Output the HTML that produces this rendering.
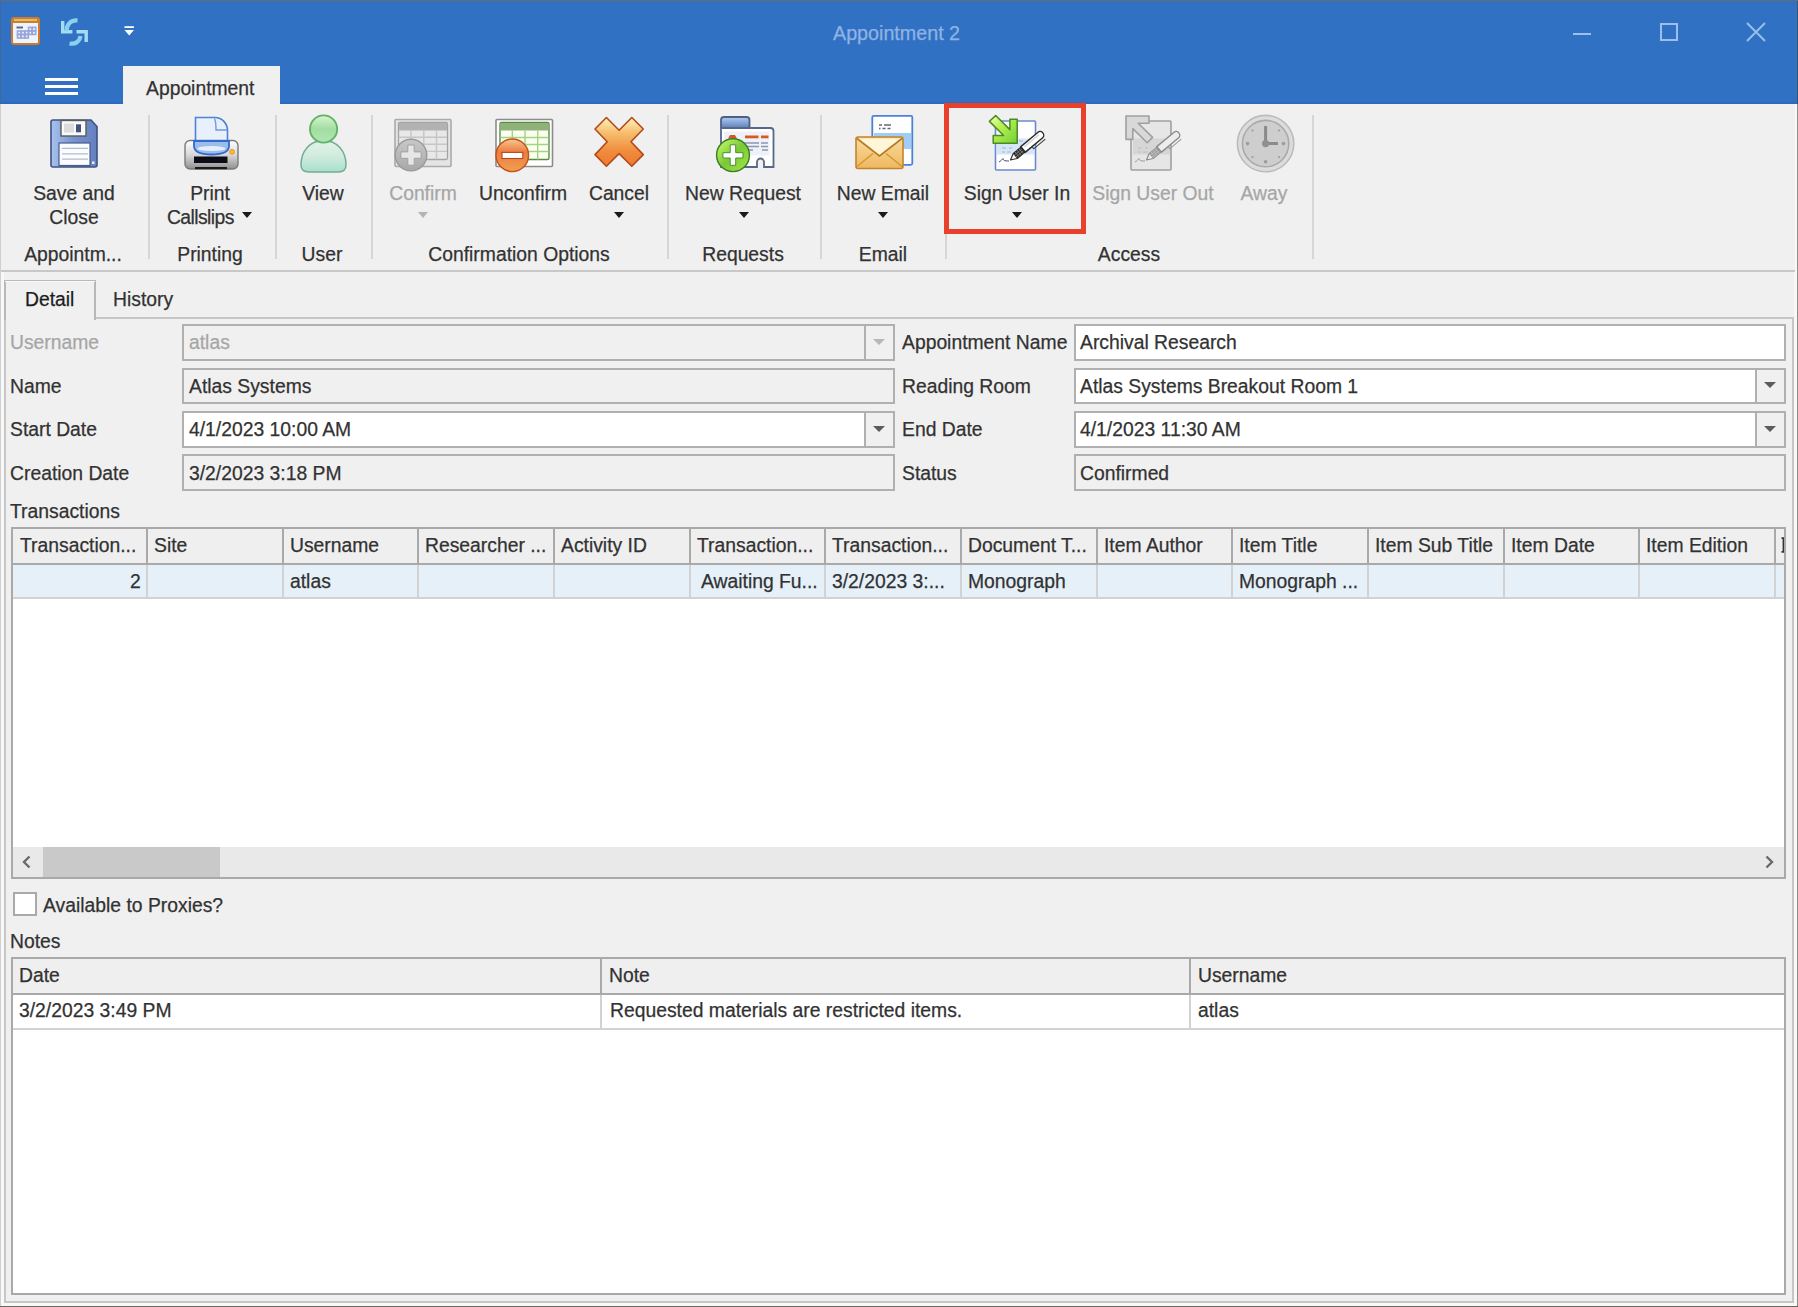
<!DOCTYPE html>
<html><head><meta charset="utf-8">
<style>
*{box-sizing:border-box}
html,body{margin:0;padding:0}
body{width:1798px;height:1307px;position:relative;overflow:hidden;background:#f0f0f0;font-family:"Liberation Sans",sans-serif;color:#323232}
.a{position:absolute}
.t{position:absolute;white-space:nowrap;font-size:20px;line-height:20px;margin-top:-1px;transform-origin:0 50%;transform:scaleX(.966);-webkit-text-stroke:0.25px currentColor}
.c{transform-origin:50% 50%;transform:translateX(-50%) scaleX(.966)}
.dis{color:#a6a6a6}
.sep{position:absolute;top:115px;width:1.5px;height:144px;background:#d6d6d6}
.arr{position:absolute;width:0;height:0;border-left:5px solid transparent;border-right:5px solid transparent;border-top:6px solid #1a1a1a}
.inp{position:absolute;border:2px solid #b0b0b0;background:#fff}
.ro{background:#f0f0f0}
.btn{position:absolute;top:0;bottom:0;right:0;width:29px;border-left:2px solid #b0b0b0;background:#f0f0f0}
.btn i{position:absolute;left:7px;top:12.5px;width:0;height:0;border-left:6px solid transparent;border-right:6px solid transparent;border-top:6.5px solid #5c5c5c}
</style></head><body>
<div class="a" style="left:0;top:0;width:1798px;height:1307px;background:#f8f8f8"></div>
<div class="a" style="left:4px;top:272px;width:1790px;height:1030px;background:#f0f0f0"></div>
<div class="a" style="left:0;top:104px;width:1px;height:1203px;background:#cfcfcf"></div>
<div class="a" style="left:1797px;top:104px;width:1px;height:1203px;background:#918c88"></div>
<div class="a" style="left:0;top:1306px;width:1798px;height:1px;background:#6b6864"></div>
<div class="a" style="left:0;top:0;width:1798px;height:104px;background:#3171c3"></div>
<div class="a" style="left:0;top:0;width:1798px;height:1px;background:#606c76"></div>
<div class="a" style="left:0;top:1px;width:1px;height:103px;background:#3d6a9e"></div>
<div class="a" style="left:1797px;top:1px;width:1px;height:103px;background:#3a5570"></div>
<div class="a" style="left:1px;top:102px;width:1796px;height:2px;background:#2d69bf"></div>
<div class="a" style="left:1px;top:104px;width:1794px;height:167px;background:#f0f0f0"></div>
<div class="t" style="left:833px;top:24px;color:#8fb3e4;transform:scaleX(.985)">Appointment 2</div>
<div class="a" style="left:1573px;top:33px;width:18px;height:2px;background:#9cc0ec"></div>
<div class="a" style="left:1660px;top:23px;width:18px;height:18px;border:2px solid #9cc0ec"></div>
<svg class="a" style="left:1745px;top:21px" width="22" height="22" viewBox="0 0 22 22"><path d="M2 2L20 20M20 2L2 20" stroke="#9cc0ec" stroke-width="1.8"/></svg>
<div class="a" style="left:45px;top:77.5px;width:33px;height:3px;background:#fff"></div>
<div class="a" style="left:45px;top:84.5px;width:33px;height:3px;background:#fff"></div>
<div class="a" style="left:45px;top:92px;width:33px;height:3px;background:#fff"></div>
<div class="a" style="left:123px;top:66px;width:157px;height:40px;background:#f0f0f0"></div>
<div class="t" style="left:146px;top:79px">Appointment</div>
<div class="a" style="left:1px;top:270px;width:1794px;height:2px;background:#c8c8c8"></div>
<div class="sep" style="left:148.25px"></div>
<div class="sep" style="left:275.25px"></div>
<div class="sep" style="left:371.25px"></div>
<div class="sep" style="left:667.25px"></div>
<div class="sep" style="left:820.25px"></div>
<div class="sep" style="left:945.25px"></div>
<div class="sep" style="left:1312.25px"></div>
<div class="t c " style="left:74px;top:184px">Save and</div>
<div class="t c " style="left:73.5px;top:207.5px">Close</div>
<div class="t c " style="left:210px;top:184px">Print</div>
<div class="t" style="left:167px;top:207.5px;letter-spacing:-0.6px">Callslips</div>
<div class="arr" style="left:241.5px;top:212px"></div>
<div class="t c " style="left:322.5px;top:184px">View</div>
<div class="t c dis" style="left:423px;top:184px">Confirm</div>
<div class="arr" style="left:417.5px;top:212px;border-top-color:#b4b4b4"></div>
<div class="t c " style="left:523px;top:184px">Unconfirm</div>
<div class="t c " style="left:619px;top:184px">Cancel</div>
<div class="arr" style="left:614px;top:212px"></div>
<div class="t c " style="left:743px;top:184px">New Request</div>
<div class="arr" style="left:739px;top:212px"></div>
<div class="t c " style="left:883px;top:184px">New Email</div>
<div class="arr" style="left:878px;top:212px"></div>
<div class="t c " style="left:1016.5px;top:184px">Sign User In</div>
<div class="arr" style="left:1012px;top:212px"></div>
<div class="t c dis" style="left:1153px;top:184px">Sign User Out</div>
<div class="t c dis" style="left:1264px;top:184px">Away</div>
<div class="t c " style="left:73px;top:245px">Appointm...</div>
<div class="t c " style="left:210px;top:245px">Printing</div>
<div class="t c " style="left:322px;top:245px">User</div>
<div class="t c " style="left:518.5px;top:245px">Confirmation Options</div>
<div class="t c " style="left:742.5px;top:245px">Requests</div>
<div class="t c " style="left:883px;top:245px">Email</div>
<div class="t c " style="left:1128.5px;top:245px">Access</div>
<div class="a" style="left:944px;top:102.5px;width:142px;height:131px;border:5px solid #e8402a"></div>
<svg class="a" style="left:0;top:0" width="1798" height="290" viewBox="0 0 1798 290">
<defs>
<linearGradient id="gFlop" x1="0" y1="0" x2="1" y2="0"><stop offset="0" stop-color="#a9c2ee"/><stop offset="0.5" stop-color="#7593cf"/><stop offset="1" stop-color="#6580c0"/></linearGradient>
<linearGradient id="gHead" x1="0" y1="0" x2="0" y2="1"><stop offset="0" stop-color="#d8f4d0"/><stop offset="0.5" stop-color="#a2dea0"/><stop offset="1" stop-color="#b0e4b8"/></linearGradient>
<linearGradient id="gBody" x1="0" y1="0" x2="0" y2="1"><stop offset="0" stop-color="#e2f2e6"/><stop offset="0.45" stop-color="#d4ece0"/><stop offset="1" stop-color="#a8e0cc"/></linearGradient>
<linearGradient id="gX" x1="0" y1="0" x2="0" y2="1"><stop offset="0" stop-color="#fff4c0"/><stop offset="0.3" stop-color="#f6c070"/><stop offset="0.7" stop-color="#f08a3c"/><stop offset="1" stop-color="#ee7a30"/></linearGradient>
<linearGradient id="gOr" x1="0" y1="0" x2="0" y2="1"><stop offset="0" stop-color="#f8c890"/><stop offset="0.4" stop-color="#ec7c40"/><stop offset="1" stop-color="#f0a050"/></linearGradient>
<linearGradient id="gGr" x1="0" y1="0" x2="1" y2="1"><stop offset="0" stop-color="#d0ff70"/><stop offset="0.5" stop-color="#78c838"/><stop offset="1" stop-color="#a8e848"/></linearGradient>
<linearGradient id="gGy" x1="0" y1="0" x2="0" y2="1"><stop offset="0" stop-color="#c8c8c8"/><stop offset="1" stop-color="#a8a8a8"/></linearGradient>
<linearGradient id="gArr" x1="0" y1="0" x2="1" y2="1"><stop offset="0" stop-color="#f0ffc0"/><stop offset="0.4" stop-color="#b8f050"/><stop offset="1" stop-color="#70d038"/></linearGradient>
<linearGradient id="gEnv" x1="0" y1="0" x2="0" y2="1"><stop offset="0" stop-color="#f8dca0"/><stop offset="1" stop-color="#eeb860"/></linearGradient>
<linearGradient id="gTab" x1="0" y1="0" x2="0" y2="1"><stop offset="0" stop-color="#b0ccf4"/><stop offset="1" stop-color="#5f7fb8"/></linearGradient>
<linearGradient id="gPr" x1="0" y1="0" x2="0" y2="1"><stop offset="0" stop-color="#ffffff"/><stop offset="0.5" stop-color="#d8d8d8"/><stop offset="1" stop-color="#909090"/></linearGradient>
</defs>

<!-- title bar calendar icon -->
<rect x="12" y="18" width="27" height="26" rx="2" fill="#eef4fc" stroke="#d27a28" stroke-width="2"/>
<rect x="12" y="18" width="27" height="5" fill="#c8822e"/>
<rect x="14" y="19.3" width="23" height="1.4" fill="#f4d08c"/>
<rect x="16.5" y="26.5" width="6.5" height="2" fill="#5a6890"/>
<g fill="none" stroke="#9aa6d8" stroke-width="1.6">
<rect x="17.5" y="31" width="3.4" height="3.4"/><rect x="21.2" y="31" width="3.4" height="3.4"/><rect x="24.9" y="31" width="3.4" height="3.4"/><rect x="28.6" y="31" width="3.4" height="3.4"/><rect x="32.3" y="31" width="3.4" height="3.4"/>
<rect x="17.5" y="34.6" width="3.4" height="3.4"/><rect x="21.2" y="34.6" width="3.4" height="3.4"/><rect x="24.9" y="34.6" width="3.4" height="3.4"/>
<rect x="28.6" y="27.4" width="3.4" height="3.4"/><rect x="32.3" y="27.4" width="3.4" height="3.4"/>
</g>
<!-- sync icon -->
<g fill="#a4dcf2">
<path d="M61 21h3.4v9h8v3.4H61z"/>
<path d="M76.5 30h11.4v12h-3.4v-8.6h-8z"/>
</g>
<path d="M66.5 31 C66.5 24 71 20 77.5 20.5" fill="none" stroke="#8ccfee" stroke-width="4.2"/>
<path d="M80.5 36 C79.5 42 75 44.5 69.5 43.5" fill="none" stroke="#8ccfee" stroke-width="4.2"/>
<!-- qat dropdown -->
<rect x="124.5" y="26.2" width="9.4" height="1.8" fill="#fff"/>
<path d="M124.5 30h9.4l-4.7 5.5z" fill="#fff"/>

<!-- Save and Close floppy -->
<path d="M51 122a2 2 0 0 1 2-2h38l6 6.5v38.5a2 2 0 0 1-2 2H53a2 2 0 0 1-2-2z" fill="url(#gFlop)" stroke="#3f5283" stroke-width="1.6"/>
<rect x="61" y="120.5" width="25" height="15.5" fill="#fafafa" stroke="#5a5a5a" stroke-width="1.4"/>
<rect x="64" y="123.5" width="10" height="9" fill="#dcdcdc"/>
<rect x="76" y="124.3" width="5" height="8" fill="#41537e"/>
<rect x="59" y="143" width="31" height="22.5" fill="#fbfcff" stroke="#4a5c8a" stroke-width="1.2"/>
<g stroke="#b4bccc" stroke-width="1.3"><path d="M62 148.3h26M62 153.8h26M62 159.2h26"/></g>
<rect x="92" y="161.5" width="2.5" height="2.5" fill="#e8eef8"/>

<!-- printer -->
<path d="M195.5 117.5h19.5c7 0 12.5 6 12.5 13v11h-32z" fill="#e8f0fb" stroke="#4e82d8" stroke-width="1.6"/>
<path d="M214.5 118.5c1.5 3 1.5 8 1.5 11.5h11" fill="none" stroke="#6c9ae0" stroke-width="1.4"/>
<rect x="185" y="140.5" width="53" height="28.5" rx="5" fill="url(#gPr)" stroke="#7a7a7a" stroke-width="1.4"/>
<path d="M194 141h35v5c0 6-8 8.5-17.5 8.5S194 152 194 146z" fill="#9cbcec" stroke="#2f6ad0" stroke-width="1.8"/>
<ellipse cx="211.5" cy="148.5" rx="14" ry="2.5" fill="#e4eefc"/>
<rect x="194" y="156.5" width="33.5" height="6.5" fill="#0c0c18"/>
<rect x="195" y="167" width="32" height="2.2" fill="#1a1a1a"/>
<circle cx="232" cy="151.8" r="2.4" fill="#f8c020" stroke="#f08020" stroke-width="0.8"/>

<!-- person -->
<path d="M301 165c0-14 9-24.5 22.5-24.5S346 151 346 165c0 4.5-3 7-8 7h-29c-5 0-8-2.5-8-7z" fill="url(#gBody)" stroke="#72ac96" stroke-width="1.5"/>
<circle cx="323.6" cy="129" r="13.6" fill="url(#gHead)" stroke="#62b264" stroke-width="1.9"/>

<!-- confirm (gray) -->
<rect x="395" y="119.5" width="56" height="47" rx="1" fill="#e4e4e4" stroke="#ababab" stroke-width="1.6"/>
<rect x="398.5" y="122.5" width="49" height="37" rx="1.5" fill="#e8e8e8" stroke="#a4a4a4" stroke-width="1.3"/>
<rect x="399" y="123" width="48" height="7.5" fill="#b2b2b2"/>
<g stroke="#c6c6c6" stroke-width="1.4"><path d="M411 130.5v29M423.8 130.5v29M436.5 130.5v29M399 137.2h48M399 144.3h48M399 151.4h48"/></g>
<circle cx="411" cy="155.1" r="15.8" fill="url(#gGy)" stroke="#9a9a9a" stroke-width="1.4"/>
<path d="M407.8 145h6.4v6.9h6.9v6.4h-6.9v6.9h-6.4v-6.9h-6.9v-6.4h6.9z" fill="#e6e6e6" stroke="#a2a2a2" stroke-width="1"/>

<!-- unconfirm -->
<rect x="496" y="119.5" width="56.5" height="47" rx="1" fill="#ffffff" stroke="#8c8c8c" stroke-width="1.6"/>
<rect x="500" y="122.5" width="49" height="37" rx="1.5" fill="#fbfff0" stroke="#5a8c44" stroke-width="1.4"/>
<rect x="500.5" y="123" width="48" height="7.5" fill="#8fb27a"/>
<g stroke="#a2d282" stroke-width="1.4"><path d="M512.3 130.5v29M525 130.5v29M537.7 130.5v29M500.5 137.5h48M500.5 144.5h48M500.5 151.5h48"/></g>
<circle cx="512.3" cy="155.3" r="16.3" fill="url(#gOr)" stroke="#c4501e" stroke-width="1.4"/>
<rect x="502" y="152.4" width="20.8" height="6.1" fill="#fff" stroke="#b84818" stroke-width="1.1"/>

<!-- cancel X -->
<path d="M606.4 117.5L619.1 130.3L631.8 117.5L643.3 129L631 141.8L643.3 154.6L631.8 166.3L619.1 153.6L606.4 166.3L595 154.6L607.2 141.8L595 129Z" fill="url(#gX)" stroke="#b44a1a" stroke-width="1.6" stroke-linejoin="round"/>

<!-- new request -->
<path d="M721 128V120a3 3 0 0 1 3-3h22.5a3 3 0 0 1 3 3v8" fill="url(#gTab)" stroke="#4c6184" stroke-width="1.8"/>
<path d="M721 128h49.5a3 3 0 0 1 3 3v36h-9.5v-5a3.5 3.5 0 0 0-7 0v5h-36z" fill="#ffffff" stroke="#56688a" stroke-width="1.8"/>
<rect x="724" y="131.5" width="45.5" height="24" fill="#eef2f8"/>
<rect x="745" y="135.5" width="13.5" height="2.8" fill="#d85a20"/>
<rect x="761" y="135.5" width="7.5" height="2.8" fill="#d85a20"/>
<path d="M728 138.5l2-3.5h5l2 3.5z" fill="#d05a20"/>
<g stroke="#8a98b0" stroke-width="1.4"><path d="M744 143h15M761 143h7M744 146.5h15M761 146.5h7M748 150h5M762 150h6"/></g>
<circle cx="733" cy="155.2" r="16.4" fill="url(#gGr)" stroke="#3c7c22" stroke-width="1.4"/>
<path d="M730.2 144.8h5.5v7.9h7.3v5.3h-7.3v7.3h-5.5v-7.3h-7.3v-5.3h7.3z" fill="#ffffff" stroke="#4c9028" stroke-width="1"/>

<!-- new email -->
<rect x="872.3" y="115.8" width="40" height="49" rx="1.5" fill="#ffffff" stroke="#4a82d8" stroke-width="1.8"/>
<rect x="874" y="133" width="37" height="16" fill="#a0ccf6"/>
<g stroke="#606878" stroke-width="1.3"><path d="M879 125h3M884 125h7M879 128.5h1.5M882.5 128.5h3M887.5 128.5h3"/></g>
<rect x="856" y="137" width="47" height="31.5" rx="2" fill="url(#gEnv)" stroke="#c48428" stroke-width="1.6"/>
<path d="M857 138.5L879.5 156L902 138.5" fill="#fff6d8" stroke="#b87820" stroke-width="1.6"/>
<path d="M857 166.5L873 153.5M902 166.5L886 153.5" stroke="#d4962c" stroke-width="1.4"/>

<!-- sign user in -->
<rect x="995.5" y="121" width="40" height="49" rx="1" fill="#ffffff" stroke="#6a88d4" stroke-width="1.6"/>
<rect x="997" y="138.5" width="37" height="16" fill="#d4e6f8"/>
<g stroke="#a8b4c8" stroke-width="1.2"><path d="M1002 148h4M1009 148h3M1002 152h3M1007 152h4M1019 141h4"/></g>
<path d="M999 162c2-1 3-2.5 4-3.5c0.5 2 1 2.5 6 2.5" fill="none" stroke="#3a4a80" stroke-width="1"/>
<path d="M995.7 115.5L1009.9 129.6V119.3H1017.2V143.2H993.2V135.5H1003.6L989.4 121.4Z" fill="url(#gArr)" stroke="#4a8a22" stroke-width="1.5" stroke-linejoin="round"/>
<g transform="translate(1010.5 160) rotate(-40)">
<path d="M0 0L6 -3.1H16V3.1H6z" fill="#fafafa" stroke="#333" stroke-width="1.2" stroke-linejoin="round"/>
<rect x="6" y="-3.6" width="10.5" height="7.2" fill="#2c2c2c"/>
<g stroke="#9a9a9a" stroke-width="0.6"><path d="M8.6 -3.6v7.2M11.2 -3.6v7.2M13.8 -3.6v7.2M6 -1.2h10.5M6 1.2h10.5"/></g>
<path d="M16.5 -3.6H39a3.2 3.6 0 0 1 0 7.2H16.5z" fill="#ffffff" stroke="#2a2a2a" stroke-width="1.4"/>
<path d="M19 -1.1H38" stroke="#d8d8d8" stroke-width="1.6"/>
<path d="M25 3.6V6.4H40" fill="none" stroke="#3a3a3a" stroke-width="1.1"/>
</g>

<!-- sign user out (disabled) -->
<rect x="1131" y="121" width="40" height="49" rx="1" fill="#e6e6e6" stroke="#a0a0a0" stroke-width="1.6"/>
<rect x="1133" y="138.5" width="37" height="16" fill="#d6d6d6"/>
<g stroke="#bdbdbd" stroke-width="1.2"><path d="M1138 148h4M1145 148h3M1138 152h3M1143 152h4"/></g>
<path d="M1135 162c2-1 3-2.5 4-3.5c0.5 2 1 2.5 6 2.5" fill="none" stroke="#9a9a9a" stroke-width="1"/>
<path d="M1126 116H1149V123.2H1138.2L1152.6 137.4L1147.2 142.8L1132.8 128.6V139.4H1126Z" fill="#d8d8d8" stroke="#a0a0a0" stroke-width="1.6" stroke-linejoin="round"/>
<g transform="translate(1146.5 160) rotate(-40)">
<path d="M0 0L6 -3.1H16V3.1H6z" fill="#eeeeee" stroke="#8a8a8a" stroke-width="1.2" stroke-linejoin="round"/>
<rect x="6" y="-3.6" width="10.5" height="7.2" fill="#9c9c9c"/>
<g stroke="#c8c8c8" stroke-width="0.6"><path d="M8.6 -3.6v7.2M11.2 -3.6v7.2M13.8 -3.6v7.2M6 -1.2h10.5M6 1.2h10.5"/></g>
<path d="M16.5 -3.6H39a3.2 3.6 0 0 1 0 7.2H16.5z" fill="#ededed" stroke="#8c8c8c" stroke-width="1.4"/>

<path d="M25 3.6V6.4H40" fill="none" stroke="#999" stroke-width="1.1"/>
</g>

<!-- away clock -->
<circle cx="1265.6" cy="143.6" r="28.2" fill="#dcdcdc" stroke="#bcbcbc" stroke-width="1.6"/>
<circle cx="1265.6" cy="143.6" r="23.2" fill="#cecece" stroke="#aaaaaa" stroke-width="1.6"/>
<g fill="#9c9c9c"><circle cx="1247.6" cy="143.6" r="1.8"/><circle cx="1283.5" cy="143.6" r="1.8"/><circle cx="1265.6" cy="161.8" r="1.8"/>
<circle cx="1252.5" cy="130.5" r="1.1"/><circle cx="1279" cy="130.5" r="1.1"/><circle cx="1252.5" cy="157" r="1.1"/><circle cx="1279" cy="157" r="1.1"/></g>
<path d="M1265.6 126v17.6h12.3" fill="none" stroke="#8a8a8a" stroke-width="3"/>
<circle cx="1265.6" cy="143.6" r="3.6" fill="#909090"/>
</svg>

<div class="a" style="left:3.5px;top:317px;width:1790.5px;height:986px;border:2px solid #c6c6c6"></div>
<div class="a" style="left:3.5px;top:279.5px;width:92.5px;height:40px;border:2px solid #b8b8b8;border-bottom:none;background:#f0f0f0"></div>
<div class="a" style="left:5px;top:281px;width:89.5px;height:1px;background:#fafafa"></div>
<div class="t" style="left:25px;top:290px;color:#1c1c1c">Detail</div>
<div class="t" style="left:113px;top:290px">History</div>
<div class="t dis" style="left:10px;top:333px">Username</div>
<div class="t" style="left:902px;top:333px">Appointment Name</div>
<div class="inp ro" style="left:182px;top:324.1px;width:713px;height:36.6px"><div class="btn"><i style="border-top-color:#b8b8b8"></i></div></div>
<div class="t dis" style="left:189px;top:333px">atlas</div>
<div class="inp" style="left:1074px;top:324.1px;width:712.3px;height:36.6px"></div>
<div class="t" style="left:1080px;top:333px">Archival Research</div>
<div class="t" style="left:10px;top:377px">Name</div>
<div class="t" style="left:902px;top:377px">Reading Room</div>
<div class="inp ro" style="left:182px;top:367.8px;width:713px;height:36.4px"></div>
<div class="t" style="left:189px;top:377px">Atlas Systems</div>
<div class="inp" style="left:1074px;top:367.8px;width:712.3px;height:36.4px"><div class="btn"><i></i></div></div>
<div class="t" style="left:1080px;top:377px">Atlas Systems Breakout Room 1</div>
<div class="t" style="left:10px;top:420px">Start Date</div>
<div class="t" style="left:902px;top:420px">End Date</div>
<div class="inp" style="left:182px;top:411px;width:713px;height:36.6px"><div class="btn"><i></i></div></div>
<div class="t" style="left:189px;top:420px">4/1/2023 10:00 AM</div>
<div class="inp" style="left:1074px;top:411px;width:712.3px;height:36.6px"><div class="btn"><i></i></div></div>
<div class="t" style="left:1080px;top:420px">4/1/2023 11:30 AM</div>
<div class="t" style="left:10px;top:464px">Creation Date</div>
<div class="t" style="left:902px;top:464px">Status</div>
<div class="inp ro" style="left:182px;top:454.3px;width:713px;height:37px"></div>
<div class="t" style="left:189px;top:464px">3/2/2023 3:18 PM</div>
<div class="inp ro" style="left:1074px;top:454.3px;width:712.3px;height:37px"></div>
<div class="t" style="left:1080px;top:464px">Confirmed</div>
<div class="t" style="left:10px;top:501.5px">Transactions</div>
<div class="a" style="left:10.7px;top:526.6px;width:1775.6px;height:352.8px;border:2px solid #a9a9a9;background:#fff"></div>
<div class="a" style="left:12.7px;top:528.6px;width:1771.6px;height:34px;background:#efefef"></div>
<div class="a" style="left:12.7px;top:562.7px;width:1771.6px;height:2px;background:#a9a9a9"></div>
<div class="a" style="left:12.7px;top:564.7px;width:1771.6px;height:32.4px;background:#e6f0f9"></div>
<div class="a" style="left:12.7px;top:597.1px;width:1771.6px;height:2px;background:#d2d2d2"></div>
<div class="a" style="left:146.2px;top:528.6px;width:2px;height:35px;background:#a9a9a9"></div>
<div class="a" style="left:146.2px;top:564.7px;width:2px;height:33px;background:#d2d2d2"></div>
<div class="a" style="left:281.83px;top:528.6px;width:2px;height:35px;background:#a9a9a9"></div>
<div class="a" style="left:281.83px;top:564.7px;width:2px;height:33px;background:#d2d2d2"></div>
<div class="a" style="left:417.46px;top:528.6px;width:2px;height:35px;background:#a9a9a9"></div>
<div class="a" style="left:417.46px;top:564.7px;width:2px;height:33px;background:#d2d2d2"></div>
<div class="a" style="left:553.09px;top:528.6px;width:2px;height:35px;background:#a9a9a9"></div>
<div class="a" style="left:553.09px;top:564.7px;width:2px;height:33px;background:#d2d2d2"></div>
<div class="a" style="left:688.72px;top:528.6px;width:2px;height:35px;background:#a9a9a9"></div>
<div class="a" style="left:688.72px;top:564.7px;width:2px;height:33px;background:#d2d2d2"></div>
<div class="a" style="left:824.35px;top:528.6px;width:2px;height:35px;background:#a9a9a9"></div>
<div class="a" style="left:824.35px;top:564.7px;width:2px;height:33px;background:#d2d2d2"></div>
<div class="a" style="left:959.98px;top:528.6px;width:2px;height:35px;background:#a9a9a9"></div>
<div class="a" style="left:959.98px;top:564.7px;width:2px;height:33px;background:#d2d2d2"></div>
<div class="a" style="left:1095.61px;top:528.6px;width:2px;height:35px;background:#a9a9a9"></div>
<div class="a" style="left:1095.61px;top:564.7px;width:2px;height:33px;background:#d2d2d2"></div>
<div class="a" style="left:1231.24px;top:528.6px;width:2px;height:35px;background:#a9a9a9"></div>
<div class="a" style="left:1231.24px;top:564.7px;width:2px;height:33px;background:#d2d2d2"></div>
<div class="a" style="left:1366.87px;top:528.6px;width:2px;height:35px;background:#a9a9a9"></div>
<div class="a" style="left:1366.87px;top:564.7px;width:2px;height:33px;background:#d2d2d2"></div>
<div class="a" style="left:1502.5px;top:528.6px;width:2px;height:35px;background:#a9a9a9"></div>
<div class="a" style="left:1502.5px;top:564.7px;width:2px;height:33px;background:#d2d2d2"></div>
<div class="a" style="left:1638.13px;top:528.6px;width:2px;height:35px;background:#a9a9a9"></div>
<div class="a" style="left:1638.13px;top:564.7px;width:2px;height:33px;background:#d2d2d2"></div>
<div class="a" style="left:1773.76px;top:528.6px;width:2px;height:35px;background:#a9a9a9"></div>
<div class="a" style="left:1773.76px;top:564.7px;width:2px;height:33px;background:#d2d2d2"></div>
<div class="t" style="left:19.7px;top:535.5px">Transaction...</div>
<div class="t" style="left:154.2px;top:535.5px">Site</div>
<div class="t" style="left:289.83px;top:535.5px">Username</div>
<div class="t" style="left:425.46px;top:535.5px">Researcher ...</div>
<div class="t" style="left:561.09px;top:535.5px">Activity ID</div>
<div class="t" style="left:696.72px;top:535.5px">Transaction...</div>
<div class="t" style="left:832.35px;top:535.5px">Transaction...</div>
<div class="t" style="left:967.98px;top:535.5px">Document T...</div>
<div class="t" style="left:1103.61px;top:535.5px">Item Author</div>
<div class="t" style="left:1239.24px;top:535.5px">Item Title</div>
<div class="t" style="left:1374.87px;top:535.5px">Item Sub Title</div>
<div class="t" style="left:1510.5px;top:535.5px">Item Date</div>
<div class="t" style="left:1646.13px;top:535.5px">Item Edition</div>
<div class="t" style="left:1781.76px;top:535.5px"></div>
<svg class="a" style="left:1779.4px;top:536px" width="8" height="18" viewBox="0 0 8 18"><path d="M2.5 2.2h4M2.5 15.8h4M4.5 2v14" stroke="#333" stroke-width="1.8"/></svg>
<div class="a" style="left:1784.3px;top:534px;width:2px;height:22px;background:#a9a9a9"></div>
<div class="t" style="left:130px;top:572px">2</div>
<div class="t" style="left:289.83px;top:572px">atlas</div>
<div class="t" style="left:700.72px;top:572px">Awaiting Fu...</div>
<div class="t" style="left:832.35px;top:572px">3/2/2023 3:...</div>
<div class="t" style="left:967.98px;top:572px">Monograph</div>
<div class="t" style="left:1239.24px;top:572px">Monograph ...</div>
<div class="a" style="left:12.7px;top:847px;width:1771.6px;height:30.4px;background:#e9e9e9"></div>
<div class="a" style="left:43.4px;top:847px;width:177px;height:30.4px;background:#c9c9c9"></div>
<svg class="a" style="left:18px;top:853px" width="18" height="18" viewBox="0 0 18 18"><path d="M11.5 3.5L6 9L11.5 14.5" fill="none" stroke="#6a6a6a" stroke-width="2.4"/></svg>
<svg class="a" style="left:1760px;top:853px" width="18" height="18" viewBox="0 0 18 18"><path d="M6.5 3.5L12 9L6.5 14.5" fill="none" stroke="#6a6a6a" stroke-width="2.4"/></svg>
<div class="a" style="left:12.5px;top:891.5px;width:24px;height:24px;border:2px solid #a9a9a9;background:#fff"></div>
<div class="t" style="left:43px;top:895.5px">Available to Proxies?</div>
<div class="t" style="left:10px;top:932px">Notes</div>
<div class="a" style="left:10.7px;top:957px;width:1775.6px;height:338px;border:2px solid #a9a9a9;background:#fff"></div>
<div class="a" style="left:12.7px;top:959px;width:1771.6px;height:34px;background:#efefef"></div>
<div class="a" style="left:12.7px;top:993px;width:1771.6px;height:2px;background:#a9a9a9"></div>
<div class="a" style="left:12.7px;top:1027.7px;width:1771.6px;height:2px;background:#d2d2d2"></div>
<div class="a" style="left:600.1px;top:959px;width:2px;height:35px;background:#a9a9a9"></div>
<div class="a" style="left:600.1px;top:995px;width:2px;height:33px;background:#d2d2d2"></div>
<div class="a" style="left:1189.3px;top:959px;width:2px;height:35px;background:#a9a9a9"></div>
<div class="a" style="left:1189.3px;top:995px;width:2px;height:33px;background:#d2d2d2"></div>
<div class="t" style="left:19px;top:966px">Date</div>
<div class="t" style="left:609px;top:966px">Note</div>
<div class="t" style="left:1198px;top:966px">Username</div>
<div class="t" style="left:19px;top:1000.5px">3/2/2023 3:49 PM</div>
<div class="t" style="left:610px;top:1000.5px">Requested materials are restricted items.</div>
<div class="t" style="left:1198px;top:1000.5px">atlas</div>
</body></html>
